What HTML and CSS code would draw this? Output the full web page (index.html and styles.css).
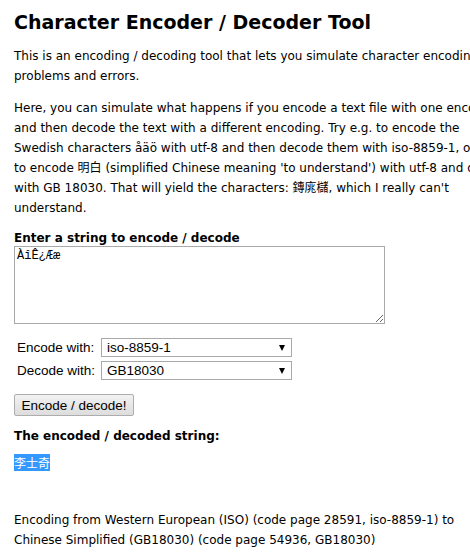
FILE: index.html
```html
<!DOCTYPE html>
<html lang="en">
<head>
    <meta charset="UTF-8">
    <meta name="viewport" content="width=device-width, initial-scale=1.0">
    <title>Character Encoder / Decoder Tool</title>
    <link rel="stylesheet" href="styles.css">
</head>
<body>
    <div class="content">
        <h1>Character Encoder / Decoder Tool</h1>
        <p>This is an encoding / decoding tool that lets you simulate character encoding problems and errors.</p>
        <p class="intro">Here, you can simulate what happens if you encode a text file with one encoding<br>
            and then decode the text with a different encoding. Try e.g. to encode the<br>
            Swedish characters åäö with utf-8 and then decode them with iso-8859-1, or<br>
            to encode 明白 (simplified Chinese meaning 'to understand') with utf-8 and decode<br>
            with GB 18030. That will yield the characters: 鏄庣櫧, which I really can't<br>
            understand.</p>

        <form action="">
            <label class="field-label" for="input">Enter a string to encode / decode</label>
            <textarea id="input" class="input-box">ÀîÊ¿Ææ</textarea>

            <table class="options">
                <tr>
                    <td class="opt-label">Encode with:</td>
                    <td>
                        <span class="select-wrap">
                            <select>
                                <option>iso-8859-1</option>
                                <option>utf-8</option>
                                <option>GB18030</option>
                            </select>
                        </span>
                    </td>
                </tr>
                <tr>
                    <td class="opt-label">Decode with:</td>
                    <td>
                        <span class="select-wrap">
                            <select>
                                <option>GB18030</option>
                                <option>utf-8</option>
                                <option>iso-8859-1</option>
                            </select>
                        </span>
                    </td>
                </tr>
            </table>

            <button type="button" class="submit">Encode / decode!</button>
        </form>

        <h2 class="result-title">The encoded / decoded string:</h2>
        <div class="result"><span class="highlight">李士奇</span></div>

        <p class="summary">Encoding from Western European (ISO) (code page 28591, iso-8859-1) to Chinese Simplified (GB18030) (code page 54936, GB18030)</p>
    </div>
</body>
</html>
```

FILE: styles.css
```css
html, body {
    margin: 0;
    padding: 0;
    overflow: hidden;
    background: #fff;
}
body {
    font-family: "DejaVu Sans", Verdana, "Noto Sans CJK SC", sans-serif;
    font-size: 12px;
    color: #000;
}

.content {
    width: 490px;
    padding: 10px 14px 0 14px;
}

h1 {
    font-size: 19px;
    font-weight: bold;
    margin: 0 0 12px 0;
    line-height: 24px;
}
p {
    margin: 0 0 12px 0;
    line-height: 20px;
}
.intro {
    white-space: nowrap;
}

form {
    margin: 0;
}
.field-label {
    display: block;
    font-weight: bold;
    line-height: 16px;
}
.input-box {
    display: block;
    width: 371px;
    height: 78px;
    box-sizing: border-box;
    margin: 0;
    padding: 2px;
    border: 1px solid #a9a9a9;
    font-family: "Liberation Mono", monospace;
    font-size: 12px;
}

.options {
    margin-top: 11px;
    border-spacing: 2px;
    font-family: "Liberation Sans", Arial, sans-serif;
    font-size: 13.5px;
}
.options td {
    padding: 1px;
}
.opt-label {
    width: 80px;
}
.select-wrap {
    position: relative;
    display: block;
}
.select-wrap select {
    appearance: none;
    -webkit-appearance: none;
    display: block;
    width: 191px;
    height: 19px;
    margin: 0;
    padding: 0 0 0 5px;
    border: 1px solid #a9a9a9;
    border-radius: 0;
    background: #fff;
    font-family: "Liberation Sans", Arial, sans-serif;
    font-size: 13.5px;
    color: #000;
}
.select-wrap::after {
    content: "";
    position: absolute;
    right: 7px;
    top: 7px;
    border-left: 3.5px solid transparent;
    border-right: 3.5px solid transparent;
    border-top: 6px solid #000;
    pointer-events: none;
}

.submit {
    display: block;
    margin-top: 11px;
    width: 120px;
    height: 22px;
    padding: 0;
    border: 1px solid #adadad;
    border-radius: 2px;
    background: linear-gradient(#f2f2f2, #dddddd);
    font-family: "Liberation Sans", Arial, sans-serif;
    font-size: 13.5px;
    color: #000;
    cursor: pointer;
}

.result-title {
    font-size: 12px;
    font-weight: bold;
    margin: 12px 0 0 0;
    line-height: 16px;
}
.result {
    margin-top: 11px;
    line-height: 16px;
    font-family: "Noto Sans CJK SC", sans-serif;
    font-size: 12px;
}
.highlight {
    background: #3399ff;
    color: #fff;
}

.summary {
    margin-top: 39px;
}
```
